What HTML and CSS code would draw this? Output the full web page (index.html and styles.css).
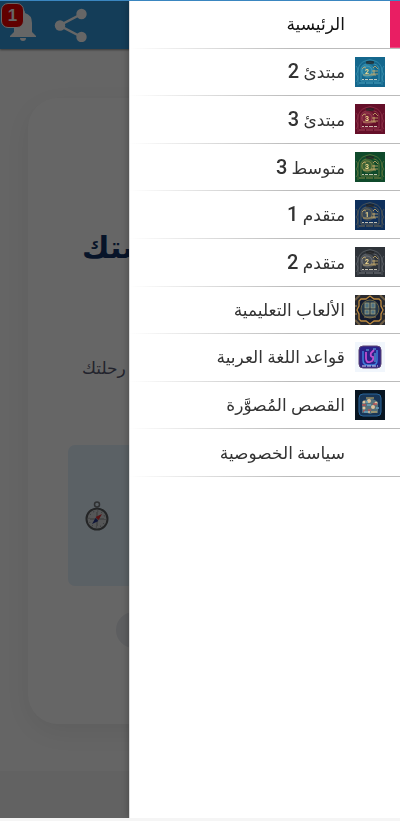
FILE: index.html
```html
<!DOCTYPE html>
<html lang="ar" dir="rtl">
    <head>
        <meta charset="UTF-8">
        <meta name="viewport" content="width=device-width, initial-scale=1.0">
        <title>الرئيسية</title>
        <link rel="stylesheet" href="styles.css">
    </head>
    <body>
        <!-- shared drawing of the level covers -->
        <svg class="defs" aria-hidden="true">
            <symbol id="cover" viewBox="0 0 30 30">
                <g fill="none" stroke="currentColor">
                    <path d="M3 28V13Q4 6 10 4Q15 1 20 4Q26 6 27 13V28" stroke-width=".7" opacity=".6"/>
                    <path d="M6 24V11Q7 8 11 7Q15 4 19 7Q24 8 24 13V24Z" stroke-width=".7" opacity=".8"/>
                    <path d="M1 9Q5 13 1 17Q5 21 1 25M29 9Q25 13 29 17Q25 21 29 25" stroke-width=".6" opacity=".6"/>
                    <circle cx="12" cy="14" r="5" stroke-width=".8" opacity=".7"/>
                </g>
                <circle cx="13" cy="14" r="7" fill="currentColor" opacity=".3"/>
                <rect x="11" y="4" width="8" height="3" rx="1" fill="#222" opacity=".7"/>
                <path d="M7 12l2-2 2 1M18 11l2-2 3 3M17 14h6M16 17h7M8 18h13M19 13v5" fill="none" stroke="#c9ad6c" stroke-width="1" opacity=".8"/>
                <path d="M7 22.500h2m1 0h3m1 0h4m1 0h3" stroke="#e9e3cf" stroke-width="1.2" opacity=".8"/>
                <path d="M4 26h6m1 0h7m1 0h7" stroke="currentColor" stroke-width=".8"/>
            </symbol>
        </svg>

        <header class="topbar">
            <button class="icon-btn" aria-label="مشاركة">
                <svg class="share" viewBox="0 0 32 34">
                    <path d="M27 6L5 17.500L27 29" fill="none" stroke="#fff" stroke-width="2.500"/>
                    <g fill="#fff"><circle cx="27" cy="6" r="5.200"/><circle cx="5.500" cy="17.500" r="5.200"/><circle cx="27" cy="29" r="5.200"/></g>
                </svg>
            </button>
            <button class="icon-btn" aria-label="الإشعارات">
                <svg class="bell" viewBox="0 0 26 32">
                    <path d="M13 1q-2 0-2 3q-7 2-7 10v9l-4 4v1h26v-1l-4-4v-9q0-8-7-10q0-3-2-3zM10 29a3 3 0 0 0 6 0z" fill="#fff"/>
                </svg>
                <span class="badge">1</span>
            </button>
        </header>

        <main class="page">
            <section class="card">
                <h1 class="title">ستك</h1>
                <p class="lead">رحلتك</p>
                <div class="tip">
                    <svg class="compass" viewBox="0 0 24 30">
                        <circle cx="12" cy="3.500" r="2.500" fill="none" stroke="#76797c" stroke-width="1.500"/>
                        <circle cx="12" cy="18" r="10.500" fill="#d5d8da" stroke="#5a5d60" stroke-width="2"/>
                        <circle cx="12" cy="18" r="8" fill="none" stroke="#70757a" stroke-width="1" stroke-dasharray="1 3.200"/>
                        <path d="M12 11v14M5 18h14" stroke="#777" stroke-width=".8"/>
                        <path d="M17 13l-3.500 6-3-3z" fill="#e02b32"/>
                        <path d="M7 23l3.500-6 3 3z" fill="#26368c"/>
                    </svg>
                </div>
                <div class="pill"></div>
            </section>
        </main>
        <footer class="footer"></footer>

        <div class="shade"></div>
        <nav class="drawer">
            <ul class="menu">
                <li class="active"><a href="#">الرئيسية</a></li>
                <li><a href="#"><svg class="thumb blue" viewBox="0 0 30 30"><use href="#cover"/><text x="12" y="17">2</text></svg><span>مبتدئ <b>2</b></span></a></li>
                <li><a href="#"><svg class="thumb red" viewBox="0 0 30 30"><use href="#cover"/><text x="12" y="17">3</text></svg><span>مبتدئ <b>3</b></span></a></li>
                <li><a href="#"><svg class="thumb green" viewBox="0 0 30 30"><use href="#cover"/><text x="12" y="17">3</text></svg><span>متوسط <b>3</b></span></a></li>
                <li><a href="#"><svg class="thumb navy" viewBox="0 0 30 30"><use href="#cover"/><text x="12" y="17">1</text></svg><span>متقدم <b>1</b></span></a></li>
                <li><a href="#"><svg class="thumb grey" viewBox="0 0 30 30"><use href="#cover"/><text x="12" y="17">2</text></svg><span>متقدم <b>2</b></span></a></li>
                <li><a href="#">
                    <svg class="thumb games" viewBox="0 0 30 30">
                        <path d="M0 5l5-5M25 0l5 5M0 25l5 5M25 30l5-5M0 11h2M0 19h2M28 11h2M28 19h2" stroke="#6d5d45" stroke-width="2"/>
                        <path d="M11 4l4-3 4 3h5l2 2v5l2 4-2 4v5l-2 2h-5l-4 3-4-3H6l-2-2v-5l-2-4 2-4V6l2-2z" fill="#141b30" stroke="#bd8a3f" stroke-width="1.300"/>
                        <circle cx="15" cy="14" r="9" fill="#25394b" stroke="#6c6545"/>
                        <g fill="#4d7184" stroke="#a09b74" stroke-width=".8"><rect x="10" y="8" width="4" height="5"/><rect x="16" y="8" width="4" height="5"/><rect x="10" y="15" width="4" height="4"/><rect x="16" y="15" width="4" height="4"/></g>
                        <path d="M9 22h12" stroke="#8e7951"/>
                    </svg>الألعاب التعليمية</a></li>
                <li><a href="#">
                    <svg class="thumb grammar" viewBox="0 0 30 30">
                        <rect x="4" y="4" width="22" height="22" rx="4" fill="#2a2189" stroke="#5d4575"/>
                        <path d="M8 9v9q0 5 5 5h5q4 0 4-5V8" fill="none" stroke="#3d7ed8" stroke-width="1.500"/>
                        <path d="M11 10v6q0 5 4 4q4-1 3-5q-3 0-2-4l3-3" fill="none" stroke="#c04dcf" stroke-width="1.800"/>
                        <path d="M11 8h3m4-1h3M20 11v9" stroke="#62b9e6"/>
                        <path d="M7 24h16" stroke="#d6d5f4" stroke-dasharray="4 1"/>
                    </svg>قواعد اللغة العربية</a></li>
                <li><a href="#">
                    <svg class="thumb stories" viewBox="0 0 30 30">
                        <rect x="4" y="4" width="22" height="22" rx="4" fill="#183657" stroke="#28659a"/>
                        <path d="M7 12q8-7 16 0v11q-4-1-8 1q-4-2-8-1z" fill="#55717b"/>
                        <g fill="#e0c29c"><circle cx="9" cy="12" r="1.500"/><circle cx="14" cy="11" r="2"/><circle cx="21" cy="13" r="1.500"/><circle cx="9" cy="18" r="1.500"/><circle cx="18" cy="17" r="2"/><circle cx="14" cy="22" r="1"/></g>
                        <path d="M7 15h4M18 14h4M13 20h3M8 21h2" stroke="#b34f55" stroke-width="1.500"/>
                        <path d="M12 15h4M21 18h3M9 22h4M11 12h2" stroke="#6aa3be" stroke-width="1.500"/>
                        <path d="M11 8h8M16 22h6" stroke="#d9b86a"/>
                    </svg>القصص المُصوَّرة</a></li>
                <li><a href="#">سياسة الخصوصية</a></li>
            </ul>
        </nav>
    </body>
</html>
```
FILE: styles.css
```css
* {
    box-sizing: border-box;
}
body {
    margin: 0;
    min-height: 100vh;
    display: flex;
    flex-direction: column;
    background-color: #fdfdfd;
    border-top: 1px solid #3a86c0;
    border-bottom: 3px solid #f5f5f5;
    font-family: Roboto, "DejaVu Sans", sans-serif;
}
.defs {
    position: absolute;
    width: 0;
    height: 0;
}
.topbar {
    display: flex;
    justify-content: flex-end;
    align-items: center;
    gap: 18px;
    height: 48px;
    padding: 0 10px;
    background-color: #3498db;
    box-shadow: 0 1px 2px #888;
}
.icon-btn {
    position: relative;
    display: flex;
    padding: 0;
    border: 0;
    background: none;
}
.share {
    width: 33px;
    height: 34px;
}
.bell {
    width: 26px;
    height: 32px;
}
.badge {
    position: absolute;
    left: -9px;
    top: -6px;
    width: 23px;
    height: 25px;
    border: 1px solid #fff;
    border-radius: 7px;
    background-color: #f00000;
    color: #fff;
    font-size: 17px;
    font-weight: bold;
    line-height: 23px;
    text-align: center;
}
.page {
    flex: 1;
    padding: 49px 28px 47px;
}
.card {
    height: 100%;
    padding: 126px 40px 76px;
    border-radius: 30px;
    background-color: #fff;
    box-shadow: 0 8px 30px rgba(0, 0, 0, 0.08);
}
.title {
    margin: 0;
    padding: 0 14px;
    color: #123466;
    font-size: 30px;
    line-height: 48px;
    text-align: left;
}
.lead {
    margin: 72px 0 0;
    padding: 0 14px;
    color: #555770;
    font-size: 17px;
    line-height: 48px;
    text-align: left;
}
.tip {
    display: flex;
    justify-content: flex-end;
    align-items: center;
    height: 141px;
    margin-top: 53px;
    padding: 0 17px;
    border-radius: 7px;
    background-color: #e3f2fd;
}
.compass {
    width: 24px;
    height: 30px;
}
.pill {
    height: 36px;
    margin: 26px 48px 0;
    border-radius: 18px;
    background-color: #e8eaf0;
}
.footer {
    height: 48px;
    background-color: #f5f5f5;
}
.shade {
    position: fixed;
    inset: 1px 0 3px;
    background-color: rgba(0, 0, 0, 0.6);
}
.drawer {
    position: fixed;
    top: 1px;
    right: 0;
    bottom: 3px;
    width: calc(100% - 129px);
    overflow-y: auto;
    border-left: 1px solid #ddd;
    background-color: #fff;
    box-shadow: 0 0 7px rgba(0, 0, 0, 0.3);
    clip-path: inset(0 0 0 -12px);
}
.menu {
    display: grid;
    grid-auto-rows: 1fr;
    min-height: 476px;
    margin: 0;
    padding: 0;
    list-style: none;
}
.menu li {
    display: flex;
    border-bottom: 1px solid;
    border-image: linear-gradient(to left, #bbb 40%, #fff) 1;
}
.menu a {
    flex: 1;
    display: flex;
    align-items: center;
    gap: 10px;
    padding: 0 15px;
    color: #333;
    font-size: 17px;
    line-height: 24px;
    text-decoration: none;
}
.menu b {
    font-size: 20px;
    font-weight: 500;
}
.menu li:first-child a,
.menu li:last-child a {
    padding-right: 55px;
}
.menu .active a {
    color: #111;
    background: linear-gradient(#e91e63, #e91e63) right / 10px 100% no-repeat;
}
.thumb {
    width: 30px;
    height: 30px;
}
.thumb text {
    fill: #f2d98d;
    font-size: 7px;
    font-weight: bold;
    text-anchor: middle;
}
.blue {
    color: #59b5cd;
    background-color: #14678d;
}
.red {
    color: #b05264;
    background-color: #650f29;
}
.green {
    color: #a49b4b;
    background-color: #0f4a2b;
}
.navy {
    color: #947f4e;
    background-color: #0e2f5b;
}
.grey {
    color: #8a8e93;
    background-color: #2e3339;
}
.games {
    background-color: #292a30;
}
.grammar {
    background-color: #f1f6fc;
}
.stories {
    background-color: #081521;
}
```
